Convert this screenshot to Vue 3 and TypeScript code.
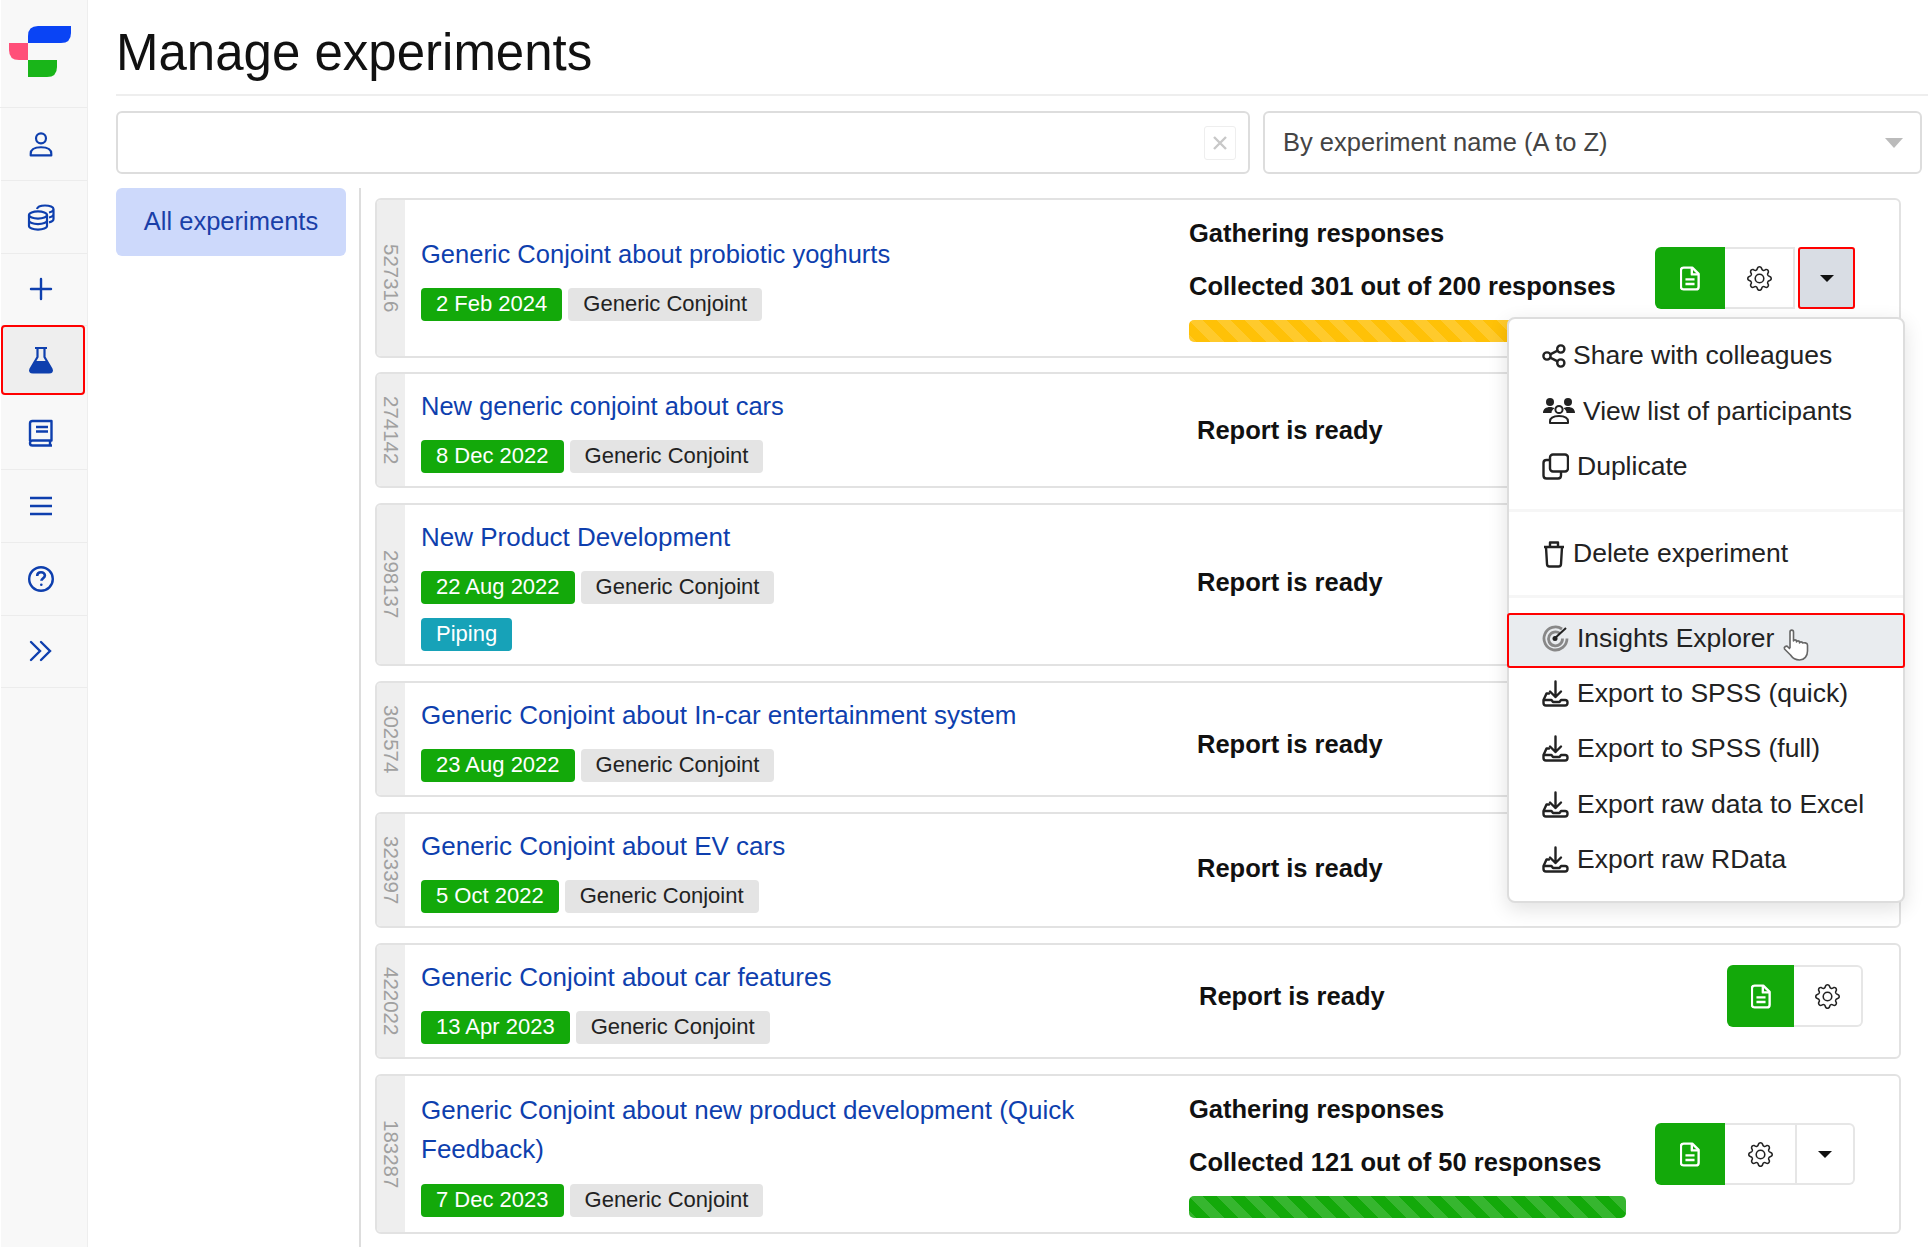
<script setup lang="ts">
interface Experiment {
  id: number;
  title: string;
  date: string;
  tagsExtra?: string;
  gathering?: string;
  bar?: 'yellow' | 'green';
  active?: boolean;
  tall?: boolean;
  nudge?: boolean;
  big?: boolean;
  shift?: string;
}

const experiments: Experiment[] = [
  { id: 527316, title: 'Generic Conjoint about probiotic yoghurts', date: '2 Feb 2024', gathering: 'Collected 301 out of 200 responses', bar: 'yellow', active: true, tall: true },
  { id: 274142, title: 'New generic conjoint about cars', date: '8 Dec 2022' },
  { id: 298137, title: 'New Product Development', date: '22 Aug 2022', tagsExtra: 'Piping', big: true, shift: 'up-small' },
  { id: 302574, title: 'Generic Conjoint about In-car entertainment system', date: '23 Aug 2022', big: true, shift: 'down' },
  { id: 323397, title: 'Generic Conjoint about EV cars', date: '5 Oct 2022', big: true, shift: 'up-small' },
  { id: 422022, title: 'Generic Conjoint about car features', date: '13 Apr 2023', nudge: true, big: true, shift: 'up' },
  { id: 183287, title: 'Generic Conjoint about new product development (Quick Feedback)', date: '7 Dec 2023', gathering: 'Collected 121 out of 50 responses', bar: 'green', tall: true, big: true },
];

const exportsList = ['Export to SPSS (quick)', 'Export to SPSS (full)', 'Export raw data to Excel', 'Export raw RData'];

const gearOuter = 'M9.796 1.343c-.527-1.79-3.065-1.79-3.592 0l-.094.319a.873.873 0 0 1-1.255.52l-.292-.16c-1.64-.892-3.433.902-2.54 2.541l.159.292a.873.873 0 0 1-.52 1.255l-.319.094c-1.79.527-1.79 3.065 0 3.592l.319.094a.873.873 0 0 1 .52 1.255l-.16.292c-.892 1.64.901 3.434 2.541 2.54l.292-.159a.873.873 0 0 1 1.255.52l.094.319c.527 1.79 3.065 1.79 3.592 0l.094-.319a.873.873 0 0 1 1.255-.52l.292.16c1.64.893 3.434-.902 2.54-2.541l-.159-.292a.873.873 0 0 1 .52-1.255l.319-.094c1.79-.527 1.79-3.065 0-3.592l-.319-.094a.873.873 0 0 1-.52-1.255l.16-.292c.893-1.64-.902-3.433-2.541-2.54l-.292.159a.873.873 0 0 1-1.255-.52l-.094-.319zm-2.633.283c.246-.835 1.428-.835 1.674 0l.094.319a1.873 1.873 0 0 0 2.693 1.115l.291-.16c.764-.415 1.6.42 1.184 1.185l-.159.292a1.873 1.873 0 0 0 1.116 2.692l.318.094c.835.246.835 1.428 0 1.674l-.319.094a1.873 1.873 0 0 0-1.115 2.693l.16.291c.415.764-.42 1.6-1.185 1.184l-.291-.159a1.873 1.873 0 0 0-2.693 1.116l-.094.318c-.246.835-1.428.835-1.674 0l-.094-.319a1.873 1.873 0 0 0-2.692-1.115l-.292.16c-.764.415-1.6-.42-1.184-1.185l.159-.291A1.873 1.873 0 0 0 1.945 8.93l-.319-.094c-.835-.246-.835-1.428 0-1.674l.319-.094A1.873 1.873 0 0 0 3.06 4.377l-.16-.292c-.415-.764.42-1.6 1.185-1.184l.292.159a1.873 1.873 0 0 0 2.692-1.115l.094-.319z';
const gearInner = 'M8 4.754a3.246 3.246 0 1 0 0 6.492 3.246 3.246 0 0 0 0-6.492zM5.754 8a2.246 2.246 0 1 1 4.492 0 2.246 2.246 0 0 1-4.492 0z';
</script>

<template>
  <div class="page">
    <aside class="sidebar">
      <div class="logo-cell">
        <svg class="logo" width="87" height="107" viewBox="0 0 87 107">
          <path d="M28 43V36Q28 26 38 26H71V33Q71 43 61 43Z" fill="#0a44f5" />
          <path d="M9 43H28V60H19Q9 60 9 50Z" fill="#ff4f79" />
          <path d="M28 60H57V67Q57 77 47 77H28Z" fill="#19b519" />
        </svg>
      </div>
      <div class="nav-cell">
        <svg width="26" height="26" viewBox="0 0 24 24" fill="none" stroke="#0e3fae" stroke-width="2">
          <circle cx="12" cy="6.800" r="4.600" />
          <path d="M2.500 22.500V21c0-4 3.500-6 9.500-6s9.500 2 9.500 6v1.500Z" stroke-linejoin="round" />
        </svg>
      </div>
      <div class="nav-cell">
        <svg width="28" height="28" viewBox="0 0 28 28" fill="none" stroke="#0e3fae" stroke-width="2.200">
          <ellipse cx="11" cy="12" rx="9" ry="3.600" />
          <path d="M2 12v11c0 2 4 3.600 9 3.600s9-1.600 9-3.600V12M2 17.500c0 2 4 3.600 9 3.600s9-1.600 9-3.600" />
          <path d="M10 6c.5-2.200 4-3.500 8-3.500 5 0 8.500 1.600 8.500 3.600v10c0 1.500-2 2.800-4.500 3.300M22 9.500c2.700-.5 4.500-1.800 4.500-3.400M22 14.500c2.700-.5 4.500-1.800 4.500-3.400" />
        </svg>
      </div>
      <div class="nav-cell">
        <svg width="24" height="24" viewBox="0 0 24 24" stroke="#0e3fae" stroke-width="2.400" stroke-linecap="round">
          <path d="M12 2v20M2 12h20" />
        </svg>
      </div>
      <div class="nav-cell nav-active">
        <svg width="26" height="28" viewBox="0 0 26 28">
          <path d="M7 2h12M9.500 2v9L2.500 23c-1 2 0 3.500 2.500 3.500h16c2.500 0 3.500-1.500 2.500-3.500l-7-12V2" fill="none" stroke="#0e3fae" stroke-width="2.200" />
          <path d="M7 15h12l5 9c.5 1.500 0 3-2.500 3h-17C2 27 1.500 25.500 2 24Z" fill="#0e3fae" />
        </svg>
      </div>
      <div class="nav-cell">
        <svg width="26" height="28" viewBox="0 0 26 28" fill="none" stroke="#0e3fae" stroke-width="2.400">
          <path d="M2 22V4.500C2 3 3 2 4.500 2h19v19.500H4.500C3 21.500 2 22.800 2 24.200S3 26.500 4.500 26.500H24" stroke-linejoin="round" />
          <path d="M22 21.500v5M8 8h12M8 12.500h12" />
        </svg>
      </div>
      <div class="nav-cell">
        <svg width="26" height="22" viewBox="0 0 26 22" stroke="#0e3fae" stroke-width="2.400">
          <path d="M2 3h22M2 11h22M2 19h22" />
        </svg>
      </div>
      <div class="nav-cell">
        <svg width="28" height="28" viewBox="0 0 28 28" fill="none" stroke="#0e3fae" stroke-width="2.400">
          <circle cx="14" cy="14" r="11.800" />
          <path d="M10.200 11c0-2.400 1.700-3.800 3.900-3.800s3.800 1.400 3.800 3.300c0 2.600-3.500 2.800-3.500 5.300" stroke-width="2.600" />
          <circle cx="14.300" cy="19.800" r="1.300" fill="#0e3fae" stroke="none" />
        </svg>
      </div>
      <div class="nav-cell">
        <svg width="24" height="22" viewBox="0 0 24 22" fill="none" stroke="#0e3fae" stroke-width="2.400" stroke-linecap="round">
          <path d="M2 2l9 9-9 9M12 2l9 9-9 9" />
        </svg>
      </div>
      <div class="nav-rest"></div>
    </aside>

    <main class="main">
      <h1 class="title">Manage experiments</h1>

      <div class="filters">
        <div class="search">
          <span class="clear">
            <svg width="18" height="18" viewBox="0 0 18 18" stroke="#c8c8c8" stroke-width="2.400">
              <path d="M3 3l12 12M15 3L3 15" />
            </svg>
          </span>
        </div>
        <div class="sort">
          <span>By experiment name (A to Z)</span>
          <span class="sort-caret"></span>
        </div>
      </div>

      <div class="content">
        <div class="left-col">
          <div class="all-tab">All experiments</div>
        </div>

        <div class="cards">
          <div v-for="exp in experiments" :key="exp.id" class="card" :class="{ tall: exp.tall }">
            <div class="card-id"><span>{{ exp.id }}</span></div>
            <div class="card-info">
              <a class="card-title" :class="{ big: exp.big }">{{ exp.title }}</a>
              <div class="tags">
                <span class="tag tag-date">{{ exp.date }}</span>
                <span class="tag tag-type">Generic Conjoint</span>
                <span v-if="exp.tagsExtra" class="tag tag-extra">{{ exp.tagsExtra }}</span>
              </div>
            </div>
            <div v-if="exp.gathering" class="status">
              <p>Gathering responses</p>
              <p>{{ exp.gathering }}</p>
              <div class="bar" :class="exp.bar"></div>
            </div>
            <div v-else class="status ready" :class="[exp.shift, { nudge: exp.nudge }]">
              <p>Report is ready</p>
            </div>
            <div class="btns" :class="[exp.shift, { short: !exp.gathering }]">
              <span class="btn btn-report">
                <svg width="20" height="25" viewBox="0 0 22 27" fill="none" stroke="#fff" stroke-width="2.600" stroke-linejoin="round">
                  <path d="M4 1.500h9.500l7 7V22.500c0 1.700-1.300 3-3 3H4c-1.700 0-3-1.300-3-3V4.500c0-1.700 1.300-3 3-3Z" />
                  <path d="M13 1.500v7.500h7.500" />
                  <path d="M6 14.500h10M6 19.500h10" />
                </svg>
              </span>
              <span class="btn btn-gear" :class="{ 'before-open': exp.active }">
                <svg width="25" height="25" viewBox="0 0 16 16" fill="#222">
                  <path :d="gearInner" />
                  <path :d="gearOuter" />
                </svg>
              </span>
              <span v-if="exp.gathering" class="btn btn-caret" :class="{ open: exp.active }"><i></i></span>
            </div>
          </div>

          <div class="menu">
            <div class="menu-group first">
              <div class="menu-item">
                <svg width="24" height="24" viewBox="0 0 24 24" fill="none" stroke="#222" stroke-width="2.400">
                  <circle cx="18.800" cy="5" r="3.600" /><circle cx="5" cy="12" r="3.600" /><circle cx="18.800" cy="19" r="3.600" />
                  <path d="M8.200 10.300l7.400-3.600M8.200 13.700l7.400 3.600" />
                </svg>
                <span class="txt-share">Share with colleagues</span>
              </div>
              <div class="menu-item">
                <svg width="34" height="28" viewBox="0 0 34 28" fill="#222">
                  <circle cx="8" cy="5" r="4" /><circle cx="26" cy="5" r="4" />
                  <path d="M1 16c0-4 3-6 7-6 2 0 3.500.5 4.500 1.500-2 1-3 2.500-3 4.500Z M33 16c0-4-3-6-7-6-2 0-3.500.5-4.500 1.500 2 1 3 2.500 3 4.500Z" />
                  <circle cx="17" cy="12.500" r="3.600" fill="none" stroke="#222" stroke-width="2" />
                  <path d="M8 26v-1.500c0-4 4-5.500 9-5.500s9 1.500 9 5.500V26Z" fill="none" stroke="#222" stroke-width="2" stroke-linejoin="round" />
                </svg>
                <span class="txt-view">View list of participants</span>
              </div>
              <div class="menu-item">
                <svg width="27" height="27" viewBox="0 0 27 27" fill="none" stroke="#222" stroke-width="2.400">
                  <rect x="8" y="1.500" width="18" height="17" rx="3" />
                  <path d="M8 7H4.500C2.800 7 1.500 8.300 1.500 10v12.500c0 1.700 1.300 3 3 3H16c1.700 0 3-1.300 3-3V19" />
                </svg>
                <span class="txt-gap">Duplicate</span>
              </div>
            </div>
            <div class="menu-group mid">
              <div class="menu-item">
                <svg width="24" height="28" viewBox="0 0 24 28" fill="none" stroke="#222" stroke-width="2.400" stroke-linejoin="round">
                  <path d="M2 7h20M4 7l1 17c0 1.500 1 2.500 2.500 2.500h9c1.500 0 2.500-1 2.500-2.500l1-17M8 7V2.500h8V7" />
                </svg>
                <span class="txt-share">Delete experiment</span>
              </div>
            </div>
            <div class="menu-group last">
              <div class="menu-item highlighted">
                <svg width="27" height="27" viewBox="0 0 27 27" fill="none" stroke="#888" stroke-width="2.800">
                  <path d="M20 4A11.500 11.500 0 1 0 25 13.500" />
                  <path d="M18 8.500A7 7 0 1 0 20.500 13.500" />
                  <path d="M12 14L24 3" stroke="#222" stroke-width="2" />
                  <circle cx="13" cy="13.500" r="2.500" fill="#222" stroke="none" />
                </svg>
                <span class="txt-gap">Insights Explorer</span>
                <svg class="hand" width="28" height="34" viewBox="0 0 28 34" fill="#fff" stroke="#666" stroke-width="1.600" stroke-linejoin="round">
                  <path d="M8 20V4c0-2.500 3.500-2.500 3.500 0v9c0-1.500 3-1.500 3 0v1c0-1.500 3-1.500 3 0v1c0-1.500 3-1.500 3 0 1-.5 5-.5 5 2v6c0 5-3 9-8 9s-7-2-9-5l-6-6c-1-2 2-4 3.500-2L8 21" />
                </svg>
              </div>
              <div v-for="label in exportsList" :key="label" class="menu-item">
                <svg width="27" height="27" viewBox="0 0 27 27" fill="none" stroke="#222" stroke-width="2.400" stroke-linecap="round" stroke-linejoin="round">
                  <path d="M13.500 1.500V17M8 11.500l5.500 5.500 5.500-5.500" />
                  <path d="M7 13.500H4.500L1.500 20v3c0 1.500 1 2.500 2.500 2.500h19c1.500 0 2.500-1 2.500-2.500v-.5c0-1.500-1-2.500-2.500-2.500h-4l-1.500 2h-6.500l-1.500-2H1.500" />
                </svg>
                <span class="txt-gap">{{ label }}</span>
              </div>
            </div>
          </div>
        </div>
      </div>
    </main>
  </div>
</template>

<style>
html, body {
  margin: 0;
  background: #fff;
  overflow: hidden;
}
</style>

<style scoped>
.page {
  display: flex;
  width: 1928px;
  height: 1247px;
  overflow: hidden;
  font-family: "Liberation Sans", Arial, sans-serif;
  color: #222;
}

.sidebar {
  width: 86px;
  margin-left: 1px;
  flex-shrink: 0;
  display: flex;
  flex-direction: column;
  background: #f8f8f8;
  border-right: 1px solid #eee;
}

.logo-cell {
  height: 107px;
  flex-shrink: 0;
  border-bottom: 1px solid #ececec;
  margin-left: -1px;
}

.logo {
  display: block;
}

.nav-cell {
  height: 71.800px;
  flex-shrink: 0;
  display: flex;
  align-items: center;
  justify-content: center;
  border-bottom: 1px solid #ececec;
  padding-right: 6px;
}

.nav-active {
  box-sizing: border-box;
  height: 70px;
  width: 84px;
  background: #eee;
  border: 2px solid #f00;
  border-radius: 4px;
  margin: -1.400px 0 2.200px;
  padding-right: 4px;
}

.nav-rest {
  flex: 1;
}

.main {
  flex: 1;
  min-width: 0;
  padding-left: 28px;
}

.title {
  margin: 0;
  height: 96px;
  border-bottom: 2px solid #eee;
  box-sizing: border-box;
  font-size: 51px;
  font-weight: 400;
  line-height: 106px;
  color: #111;
}

.filters {
  display: flex;
  gap: 13px;
  margin-top: 15px;
}

.search {
  width: 1134px;
  height: 63px;
  box-sizing: border-box;
  border: 2px solid #ddd;
  border-radius: 6px;
  display: flex;
  align-items: center;
  justify-content: flex-end;
  padding-right: 12px;
}

.clear {
  width: 32px;
  height: 34px;
  box-sizing: border-box;
  border: 1px solid #eee;
  border-radius: 3px;
  display: flex;
  align-items: center;
  justify-content: center;
}

.sort {
  width: 659px;
  height: 63px;
  box-sizing: border-box;
  border: 2px solid #ddd;
  border-radius: 6px;
  display: flex;
  align-items: center;
  justify-content: space-between;
  padding: 0 17px 0 18px;
  font-size: 25.500px;
  color: #444;
}

.sort-caret {
  width: 0;
  height: 0;
  border-left: 9px solid transparent;
  border-right: 9px solid transparent;
  border-top: 10px solid #bbb;
}

.content {
  display: flex;
  margin-top: 14px;
  height: 1100px;
}

.left-col {
  width: 245px;
  flex-shrink: 0;
  border-right: 2px solid #ddd;
  box-sizing: border-box;
}

.all-tab {
  width: 230px;
  height: 68px;
  line-height: 66px;
  box-sizing: border-box;
  text-align: center;
  background: #cdd9fb;
  border-radius: 6px;
  font-size: 25.500px;
  color: #1a3fa8;
}

.cards {
  position: relative;
  margin: 10px 0 0 14px;
  width: 1526px;
  display: flex;
  flex-direction: column;
  gap: 15px;
}

.card {
  display: flex;
  align-items: center;
  min-height: 116px;
  border: 2px solid #e2e2e2;
  border-radius: 6px;
  box-sizing: border-box;
  background: #fff;
}

.card.tall {
  min-height: 160px;
}

.card.tall + .card {
  margin-top: -1px;
}

.card-id {
  align-self: stretch;
  width: 28px;
  flex-shrink: 0;
  background: #eee;
  display: flex;
  align-items: center;
  justify-content: center;
  border-radius: 4px 0 0 4px;
}

.card-id span {
  writing-mode: vertical-rl;
  font-size: 20.500px;
  color: #a0a0a0;
}

.card-info {
  width: 784px;
  flex-shrink: 0;
  box-sizing: border-box;
  padding: 12.500px 100px 13px 16px;
}

.card-title {
  display: block;
  font-size: 25.500px;
  line-height: 39px;
  color: #0e3fae;
}

.card-title.big {
  font-size: 26px;
}

.tags {
  display: flex;
  flex-wrap: wrap;
  gap: 14px 6px;
  margin-top: 14.500px;
}

.tag {
  height: 33px;
  line-height: 32px;
  padding: 0 15px;
  border-radius: 4px;
  font-size: 22px;
}

.tag-date {
  background: #13a90a;
  color: #fff;
}

.tag-type {
  background: #e4e4e4;
  color: #222;
}

.tag-extra {
  background: #17a2b8;
  color: #fff;
  margin-right: 400px;
}

.status {
  width: 437px;
  flex-shrink: 0;
  padding-top: 3px;
  font-size: 25.500px;
  font-weight: 700;
  color: #111;
}

.status p {
  margin: 0 0 23px;
  line-height: 30px;
  white-space: nowrap;
}

.status.ready {
  padding: 0 0 0 8px;
  width: 429px;
}

.status.ready p {
  margin: 0;
}

.status.nudge {
  padding-left: 10px;
  width: 427px;
}

.up-small {
  margin-bottom: 5px;
}

.up {
  margin-bottom: 10px;
}

.down {
  margin-top: 10px;
}

.bar {
  height: 22px;
  margin-top: -4px;
  border-radius: 5px;
  background-size: 28px 28px;
  background-image: linear-gradient(45deg, rgba(255, 255, 255, .15) 25%, transparent 25%, transparent 50%, rgba(255, 255, 255, .15) 50%, rgba(255, 255, 255, .15) 75%, transparent 75%, transparent);
}

.bar.yellow {
  background-color: #ffc107;
}

.bar.green {
  background-color: #13a90a;
}

.btns {
  display: flex;
  height: 62px;
  margin-left: auto;
  margin-right: 44px;
}

.btns.short {
  margin-right: 36px;
}

.btn {
  display: flex;
  align-items: center;
  justify-content: center;
  box-sizing: border-box;
  height: 62px;
}

.btn-report {
  width: 70px;
  background: #13a90a;
  border-radius: 6px 0 0 6px;
}

.btn-gear {
  width: 72px;
  border: 2px solid #e6e6e6;
  border-left: 0;
}

.btn-gear.before-open {
  width: 70px;
}

.btns.short .btn-report {
  width: 67px;
}

.btns.short .btn-gear {
  width: 69px;
  border-radius: 0 6px 6px 0;
}

.btn-caret {
  width: 58px;
  border: 2px solid #e6e6e6;
  border-left: 0;
  border-radius: 0 6px 6px 0;
}

.btn-caret i {
  width: 0;
  height: 0;
  border-left: 7px solid transparent;
  border-right: 7px solid transparent;
  border-top: 7px solid #111;
}

.btn-caret.open {
  width: 57px;
  margin-left: 3px;
  background: #d9dde4;
  border: 2px solid #f00;
  border-radius: 3px;
}

.menu {
  position: absolute;
  top: 119px;
  left: 1132px;
  width: 398px;
  height: 586px;
  box-sizing: border-box;
  background: #fff;
  border: 2px solid #ddd;
  border-radius: 8px;
  box-shadow: 0 6px 20px rgba(0, 0, 0, .12);
}

.menu-group.first {
  height: 193px;
  padding-top: 9px;
  box-sizing: border-box;
  border-bottom: 3px solid #f6f6f6;
}

.menu-group.mid {
  height: 86px;
  display: flex;
  align-items: center;
  box-sizing: border-box;
  border-bottom: 3px solid #f6f6f6;
}

.menu-group.last {
  padding-top: 15px;
}

.menu-item {
  position: relative;
  display: flex;
  align-items: center;
  height: 55.500px;
  padding-left: 33px;
  font-size: 26.500px;
  white-space: nowrap;
  color: #222;
  gap: 9px;
}

.menu-item .txt-share {
  margin-left: -2px;
}

.menu-item .txt-view {
  margin-left: -2px;
}

.menu-item .txt-gap {
  margin-left: -1px;
}

.menu-item.highlighted {
  height: 55px;
  margin: 0 -2px -2.500px;
  box-sizing: border-box;
  background: #e9ecef;
  border: 2px solid #f00;
  border-radius: 3px;
  padding: 0 0 5px 33px;
}

.hand {
  position: absolute;
  left: 273px;
  top: 13px;
}
</style>
